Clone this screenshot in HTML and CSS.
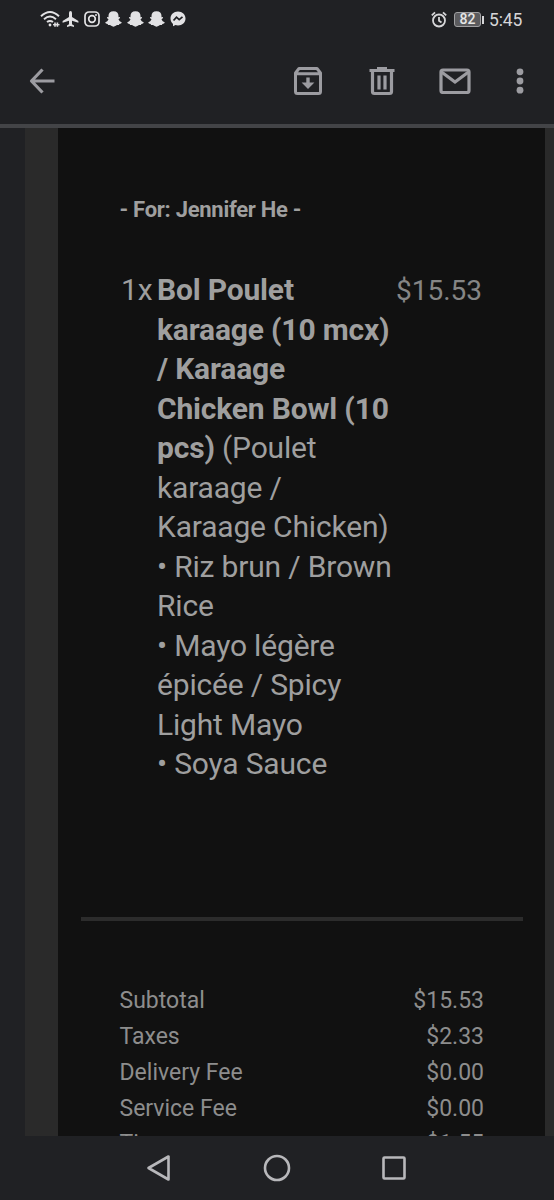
FILE: index.html
```html
<!DOCTYPE html>
<html lang="en">
<head>
<meta charset="utf-8">
<title>Order receipt</title>
<link rel="stylesheet" href="styles.css">
</head>
<body>
<div class="phone">
  <header class="status">
    <div class="status-left">
      <svg width="21" height="18" viewBox="0 0 21 18" fill="none" stroke="#e2e2e4" stroke-width="1.9"><path d="M1 6.2Q10 -2.2 19 6.2M4 9.2Q10 3.8 16 9.2M7 12.1Q10 9.7 13 12.1"/><circle cx="10" cy="15" r="1.4" fill="#e2e2e4" stroke="none"/><path d="M13 14.700h6.500" stroke-width="1.300"/><path d="M15 12.500v4.300M17.400 12.500v4.300" stroke-width="1.600"/></svg>
      <svg class="plane" width="17" height="18" viewBox="0 0 17 18" fill="#e2e2e4"><path d="M8.500 1Q10 1 10 3v4l6.400 4v1.700l-6.400-2v3.500l2 1.400v1.300l-3.500-1-3.500 1v-1.300l2-1.400v-3.500l-6.400 2V11L7 7V3Q7 1 8.500 1z"/></svg>
      <svg class="insta" width="16" height="16" viewBox="0 0 16 16" fill="none" stroke="#e2e2e4" stroke-width="1.7"><rect x="1" y="1" width="14" height="14" rx="4"/><circle cx="8" cy="8" r="3.3"/><circle cx="12" cy="4" r="1" fill="#e2e2e4" stroke="none"/></svg>
      <svg class="snap" width="17" height="16" viewBox="0 0 17 16"><path d="M8.500.3c3.300 0 5 1.900 5 4.600v1.300l1.300-.2.3.9-1.600 1.300c.6 1.700 1.700 2.500 3.200 3 0 1.200-1.100 1.500-2.300 1.700l-.5 1.200c-1.900-.4-2.500.1-3.100.7-1.200 1.100-3.400 1.100-4.600 0-.6-.6-1.200-1.100-3.100-.7l-.5-1.200c-1.200-.2-2.300-.5-2.300-1.700 1.500-.5 2.600-1.300 3.200-3L1.900 6.900l.3-.9 1.300.2V4.900C3.500 2.200 5.200.3 8.500.3z"/></svg>
      <svg class="snap" width="17" height="16" viewBox="0 0 17 16"><path d="M8.500.3c3.300 0 5 1.900 5 4.600v1.300l1.300-.2.3.9-1.600 1.300c.6 1.700 1.700 2.500 3.200 3 0 1.200-1.100 1.500-2.300 1.700l-.5 1.200c-1.900-.4-2.500.1-3.100.7-1.200 1.100-3.400 1.100-4.600 0-.6-.6-1.200-1.100-3.100-.7l-.5-1.200c-1.200-.2-2.300-.5-2.300-1.700 1.500-.5 2.600-1.300 3.200-3L1.900 6.900l.3-.9 1.300.2V4.900C3.500 2.200 5.200.3 8.500.3z"/></svg>
      <svg class="snap" width="17" height="16" viewBox="0 0 17 16"><path d="M8.500.3c3.300 0 5 1.900 5 4.600v1.300l1.300-.2.3.9-1.600 1.300c.6 1.700 1.700 2.500 3.200 3 0 1.200-1.100 1.500-2.300 1.700l-.5 1.200c-1.900-.4-2.500.1-3.100.7-1.200 1.100-3.400 1.100-4.600 0-.6-.6-1.200-1.100-3.100-.7l-.5-1.200c-1.200-.2-2.300-.5-2.300-1.700 1.500-.5 2.600-1.300 3.200-3L1.900 6.900l.3-.9 1.300.2V4.900C3.500 2.200 5.200.3 8.500.3z"/></svg>
      <svg class="messenger" width="16" height="16" viewBox="0 0 16 16"><path d="M8 .5c4.300 0 7.500 3 7.500 7s-3.200 7-7.500 7c-1 0-1.700-.1-2.500-.4L3 15.200v-2.300C1.400 11.600.5 9.700.5 7.500c0-4 3.200-7 7.500-7z" fill="#e2e2e4"/><path d="M3.500 9.500l3-3.300 2.700 2.400 3.300-2.700" fill="none" stroke="#202124" stroke-width="1.8"/></svg>
    </div>
    <div class="status-right">
      <svg width="16" height="17" viewBox="0 0 16 17" fill="none" stroke="#d6d6d8" stroke-width="1.8"><circle cx="8" cy="9.500" r="6"/><path d="M8 6v3.700l2.500 1.700M.8 4.300L4 1.300M15.200 4.300L12 1.300"/></svg>
      <div class="battery"><span class="battery-level">82</span><span class="battery-tip"></span></div>
      <span class="clock">5:45</span>
    </div>
  </header>
  <nav class="toolbar">
    <svg class="back" width="26" height="26" viewBox="0 0 26 26" fill="none" stroke="#9c9ca1" stroke-width="3.200"><path d="M25.500 13H3M13.500 1.500L2.500 13l11 11.500" stroke-linejoin="round"/></svg>
    <svg class="archive" width="30" height="30" viewBox="0 0 30 30" fill="none" stroke="#9c9ca1" stroke-width="3"><path d="M2.500 7L6 2.500h18L27.500 7v18.500q0 2-2 2h-21q-2 0-2-2zM2.500 7.800h25" stroke-linejoin="round"/><path d="M15 11.500v6" stroke-width="3.400"/><path d="M8.600 16.500h12.800L15 23z" fill="#9c9ca1" stroke="none"/></svg>
    <svg class="trash" width="26" height="30" viewBox="0 0 26 30" fill="none" stroke="#9c9ca1" stroke-width="3.200"><path d="M.5 4.500h25M8 2.500h10M3.500 5v20.500q0 2 2 2h15q2 0 2-2V5M10 9.500v14M16 9.500v14"/></svg>
    <svg class="mail" width="32" height="26" viewBox="0 0 32 26" fill="none" stroke="#9c9ca1" stroke-width="3.200"><rect x="2" y="2" width="28" height="22.500" rx="2"/><path d="M2.500 4L16 14 29.500 4"/></svg>
    <svg width="8" height="26" viewBox="0 0 8 26" fill="#9c9ca1"><circle cx="4" cy="3.800" r="3.400"/><circle cx="4" cy="13" r="3.400"/><circle cx="4" cy="22.200" r="3.400"/></svg>
  </nav>
  <main class="message">
    <div class="receipt">
      <p class="recipient">- For: Jennifer He -</p>
      <section class="item">
        <span class="qty">1x</span>
        <div class="description"><b>Bol Poulet<br>karaage (10 mcx)<br>/ Karaage<br>Chicken Bowl (10<br>pcs)</b> (Poulet<br>karaage /<br>Karaage Chicken)<br>• Riz brun / Brown<br>Rice<br>• Mayo légère<br>épicée / Spicy<br>Light Mayo<br>• Soya Sauce</div>
        <span class="price">$15.53</span>
      </section>
      <hr class="rule">
      <dl class="totals">
        <div class="row"><dt>Subtotal</dt><dd>$15.53</dd></div>
        <div class="row"><dt>Taxes</dt><dd>$2.33</dd></div>
        <div class="row"><dt>Delivery Fee</dt><dd>$0.00</dd></div>
        <div class="row"><dt>Service Fee</dt><dd>$0.00</dd></div>
        <div class="row"><dt>Tip</dt><dd>$1.55</dd></div>
      </dl>
    </div>
  </main>
  <footer class="navigation">
    <svg width="24" height="28" viewBox="0 0 24 28"><path d="M22.500 2.500v23L2.500 14z"/></svg>
    <svg width="28" height="28" viewBox="0 0 28 28"><circle cx="14" cy="14" r="12"/></svg>
    <svg width="24" height="24" viewBox="0 0 24 24"><rect x="1.500" y="1.500" width="21" height="21" rx="1"/></svg>
  </footer>
</div>
</body>
</html>
```
FILE: styles.css
```css
* { box-sizing: border-box; }
body { margin: 0; background: #202124; font-family: Roboto, sans-serif; }
svg { display: block; flex: none; }
.phone { width: 554px; height: 1200px; display: flex; flex-direction: column; overflow: hidden; }
.status { height: 40px; display: flex; justify-content: space-between; padding: 0 31px 0 40px; }
.status-left, .status-right { display: flex; align-items: center; }
.status-left { padding-bottom: 2px; }
.status-right { padding-bottom: 1px; }
.plane { margin-left: 1px; }
.insta { margin: 0 5px; }
.snap { margin-right: 4.500px; fill: #e2e2e4; }
.battery { display: flex; align-items: center; margin: 0 5px 0 7px; }
.battery-level { width: 27px; height: 15px; border: 1.500px solid #a0a0a2; border-radius: 3px; background: #5b5b5e; color: #e6e6e6; font-size: 14px; line-height: 13px; text-align: center; font-weight: 500; }
.battery-tip { width: 2px; height: 8px; margin-left: 1px; background: #d6d6d8; }
.clock { color: #d6d6d8; font-size: 17.500px; width: 34px; white-space: nowrap; letter-spacing: -0.1px; }
.toolbar { height: 84px; display: flex; align-items: center; padding: 0 30px 2px 29px; }
.back { margin-right: 238px; }
.archive { margin-right: 45.500px; }
.trash { margin-right: 44.500px; }
.mail { margin-right: 45px; }
.message { height: 1012px; border-top: 4px solid #434447; padding: 0 9px 0 25px; background: linear-gradient(to right, #202124 25px, #2a2a2a 25px); overflow: hidden; }
.receipt { margin-left: 33px; background: #111; height: 1008px; overflow: hidden; color: #9f9f9f; }
.recipient { margin: 69px 0 47px 61.500px; font-size: 22px; line-height: 26px; font-weight: 700; letter-spacing: -0.28px; }
.item { display: grid; grid-template-columns: 36px 239px 86px; margin-left: 63px; font-size: 30px; line-height: 39.500px; white-space: nowrap; height: 514px; letter-spacing: -0.18px; }
.price { font-size: 28px; line-height: 41.500px; color: #858585; letter-spacing: 0; }
.rule { height: 4px; border: 0; background: #2c2c2c; margin: 133px 22px 0 23px; }
.totals { margin: 62px 61px 0 61.500px; font-size: 23px; color: #8d8d8d; }
.row { display: flex; justify-content: space-between; line-height: 36px; }
.row:last-child { line-height: 34px; }
.row dd { margin: 0; }
.navigation { height: 64px; display: flex; align-items: center; padding-left: 146px; gap: 93px; }
.navigation svg:nth-child(2) { margin-right: -2px; }
.navigation svg { fill: none; stroke: #b8b8bb; stroke-width: 2.600; stroke-linejoin: round; }
```
